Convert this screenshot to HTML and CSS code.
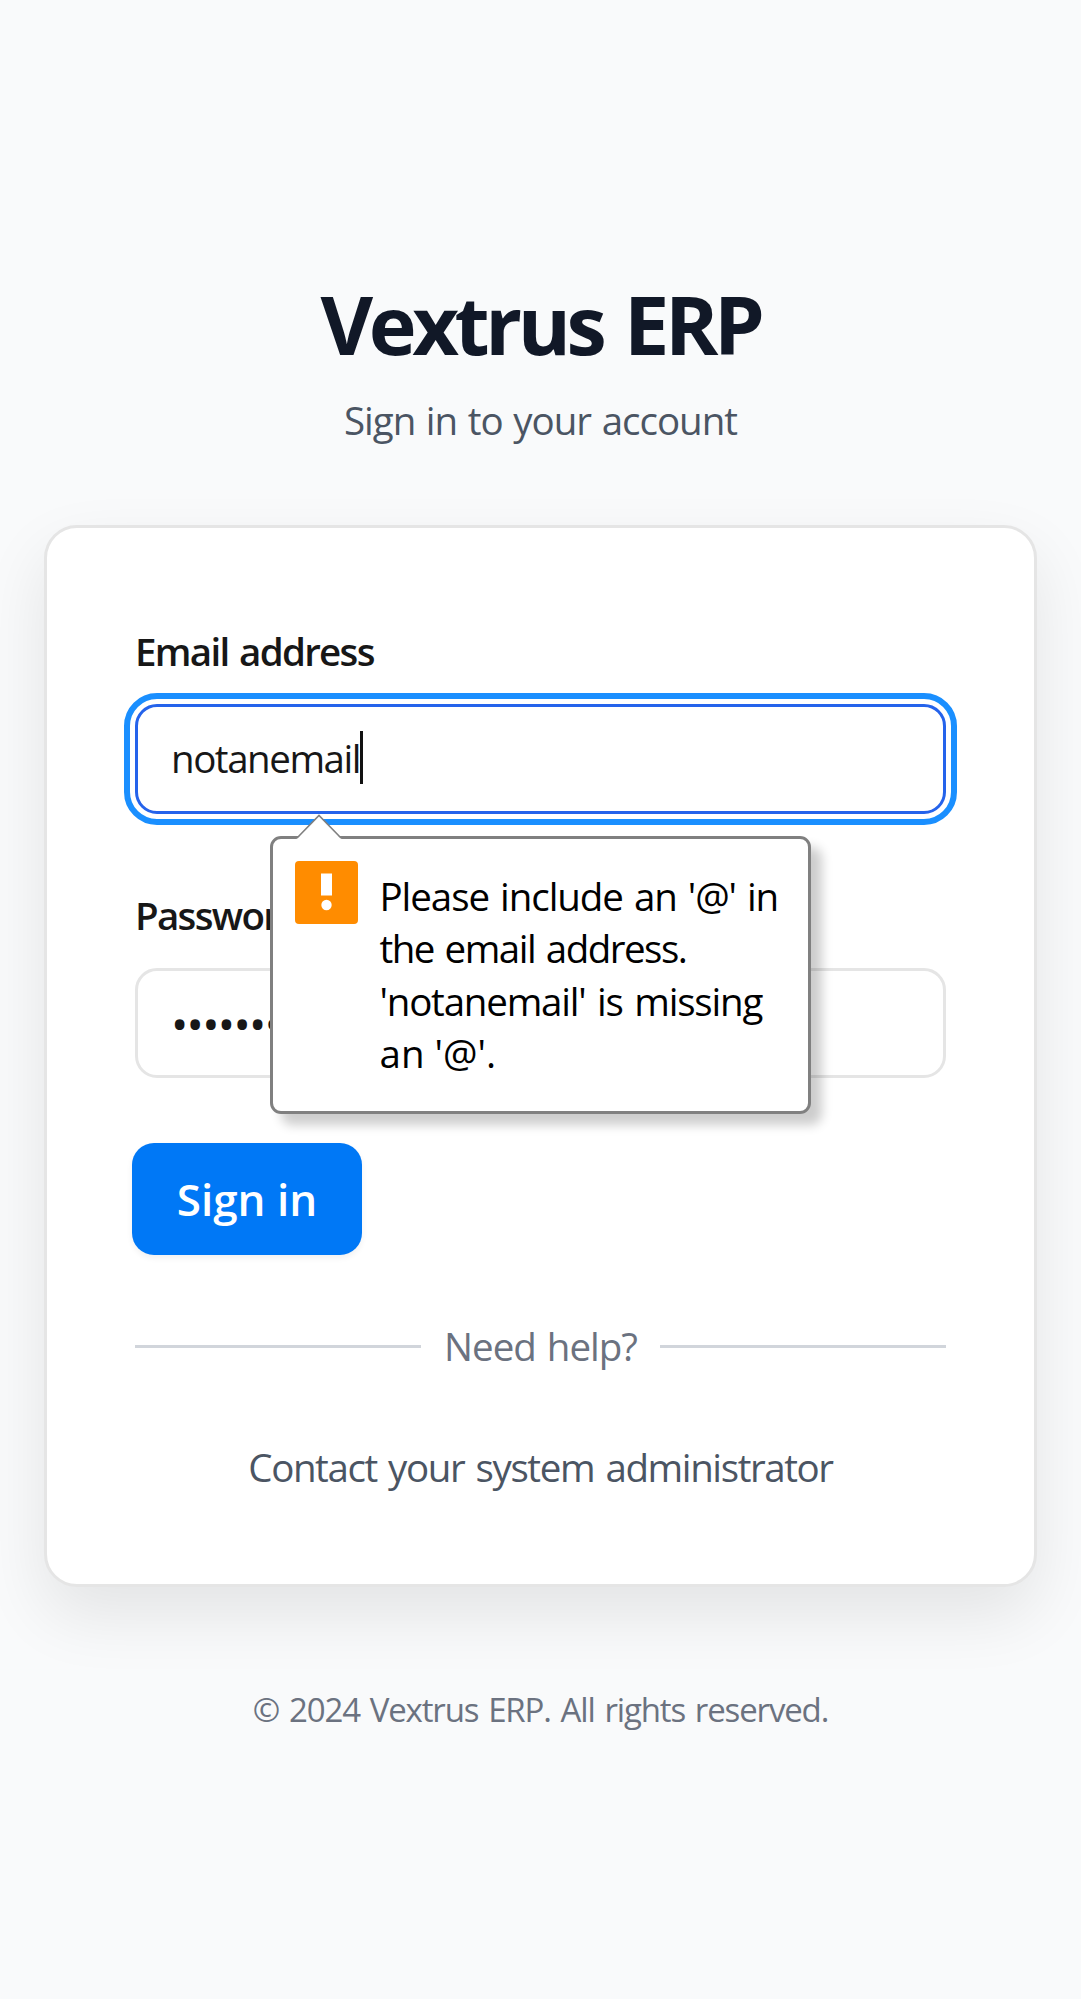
FILE: index.html
```html
<!DOCTYPE html>
<html lang="en">
<head>
<meta charset="utf-8">
<title>Vextrus ERP</title>
<link rel="stylesheet" href="styles.css">
</head>
<body>
<main class="page">
  <header class="header">
    <h1 class="title">Vextrus ERP</h1>
    <p class="subtitle">Sign in to your account</p>
  </header>
  <form class="card" novalidate>
    <label class="label">Email address</label>
    <div class="field">
      <div class="input input-focused"><span class="value">notanemail</span><i class="caret"></i></div>
      <div class="popup" role="alert">
        <svg class="arrow" width="46" height="26" viewBox="0 0 46 26"><path d="M1 24.5 23 2 45 24.5V26H1Z" fill="#fff"/><path d="M1 24 23 1.5 45 24" fill="none" stroke="#808080" stroke-width="1.6"/></svg>
        <svg class="warning" width="63" height="63" viewBox="0 0 63 63"><rect width="63" height="63" rx="4" fill="#ff8c00"/><rect x="26" y="12.5" width="11" height="22" fill="#fff"/><circle cx="31.5" cy="44" r="5.2" fill="#fff"/></svg>
        <p class="message"><span class="line-1">Please include an '@' in</span><br><span class="line-2">the email address.</span><br><span class="line-3">'notanemail' is missing</span><br><span>an '@'.</span></p>
      </div>
    </div>
    <label class="label label-password">Password</label>
    <div class="input"><span class="dots">••••••••</span></div>
    <button class="button" type="button">Sign in</button>
    <div class="divider"><span>Need help?</span></div>
    <p class="contact">Contact your system administrator</p>
  </form>
  <footer class="footer">© 2024 Vextrus ERP. All rights reserved.</footer>
</main>
</body>
</html>
```
FILE: styles.css
```css
* { box-sizing: border-box; margin: 0; }
body {
  background: #f9fafb;
  font-family: "Open Sans", "Noto Sans", sans-serif;
  font-size: 38.5px;
  color: #171717;
}
.page { min-height: 1999px; padding: 273px 44px 0; }
.header { text-align: center; }
.title {
  font-size: 81px;
  line-height: 101px;
  font-weight: 700;
  letter-spacing: -4.4px;
  word-spacing: 5px;
  color: #111827;
}
.subtitle {
  margin-top: 18px;
  line-height: 56px;
  letter-spacing: -1px;
  word-spacing: 1.6px;
  color: #4b5563;
}
.card {
  display: flex;
  flex-direction: column;
  margin-top: 77px;
  height: 1062px;
  padding: 103px 88px 0;
  background: #fff;
  border: 3px solid #e5e5e5;
  border-radius: 33px;
  box-shadow: 0 28px 66px rgba(0, 0, 0, .09);
}
.label { line-height: 40px; font-weight: 600; letter-spacing: -1.7px; word-spacing: 2.2px; }
.label-password { margin-top: 81px; }
.field { position: relative; margin-top: 33px; }
.input {
  display: flex;
  align-items: center;
  height: 110px;
  padding: 0 33px;
  border: 3px solid #e5e5e5;
  border-radius: 22px;
}
.label-password + .input { margin-top: 33px; }
.input-focused {
  padding-bottom: 2px;
  border-color: #2563eb;
  outline: 6px solid #1a8fff;
  outline-offset: 5px;
}
.value { letter-spacing: -1.45px; }
.caret { width: 3px; height: 53px; margin-top: -1px; background: #111; }
.dots { font-size: 46px; letter-spacing: -1.7px; }
.popup {
  position: absolute;
  left: 135px;
  top: 132px;
  width: 541px;
  height: 278px;
  display: flex;
  padding: 22px 0 0 21.5px;
  background: #fff;
  border: 3px solid #808080;
  border-radius: 11px;
  color: #000;
  box-shadow: 11px 11px 11px rgba(0, 0, 0, .2);
}
.arrow { position: absolute; left: 23px; top: -25px; }
.warning { flex: none; }
.message { margin: 9px 0 0 22px; line-height: 52.3px; white-space: nowrap; }
.line-1 { letter-spacing: -1.05px; word-spacing: 2px; }
.line-2 { letter-spacing: -1.5px; word-spacing: 2.1px; }
.line-3 { letter-spacing: -1.2px; word-spacing: 2.7px; }
.button {
  margin: 65px 0 0 -3px;
  width: 230px;
  height: 112px;
  padding: 0;
  border: 0;
  border-radius: 22px;
  background: #0078f6;
  color: #fff;
  font: 600 44px/60px "Open Sans", "Noto Sans", sans-serif;
  box-shadow: 0 3px 6px rgba(0, 0, 0, .06);
}
.divider {
  display: flex;
  align-items: center;
  gap: 23px;
  margin-top: 63px;
  line-height: 56px;
  letter-spacing: -1px;
  word-spacing: 2px;
  color: #6b7280;
}
.divider::before, .divider::after { content: ""; flex: 1; height: 3px; background: #d1d5db; }
.contact {
  margin-top: 65px;
  line-height: 56px;
  letter-spacing: -1.4px;
  word-spacing: 2.7px;
  text-align: center;
  color: #4b5563;
}
.footer {
  margin-top: 100px;
  font-size: 33px;
  line-height: 45px;
  letter-spacing: -1.15px;
  word-spacing: 2.4px;
  text-align: center;
  color: #6b7280;
}
```
